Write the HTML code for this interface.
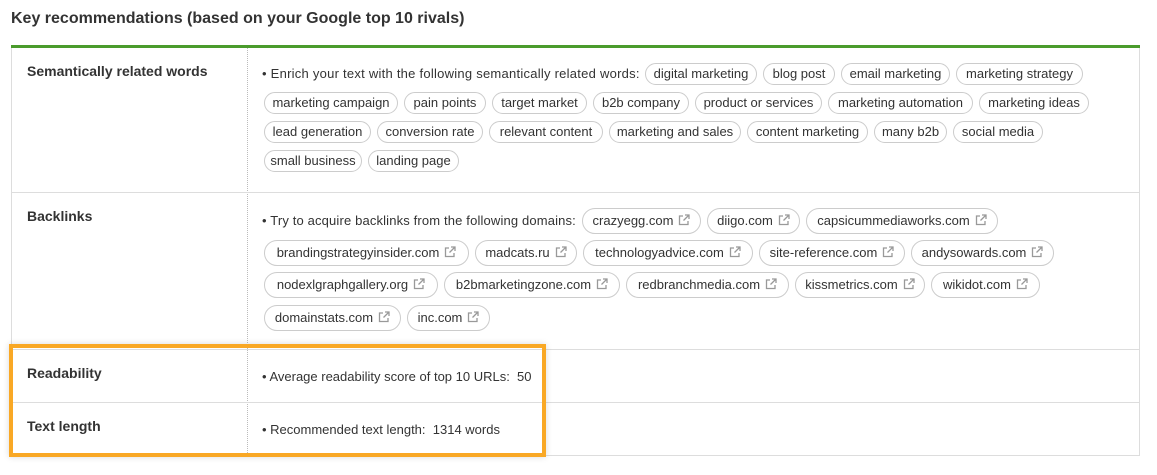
<!DOCTYPE html>
<html><head><meta charset="utf-8"><style>
body{margin:0;width:1157px;height:475px;background:#fff;position:relative;font-family:"Liberation Sans",sans-serif;color:#333;overflow:hidden}
.a{position:absolute;white-space:nowrap}
.t{position:absolute;height:22px;border:1px solid #ccc;border-radius:12px;box-sizing:border-box;font-size:13px;line-height:20px;text-align:center;white-space:nowrap;overflow:hidden;color:#333}
.b{height:26px;line-height:24px;border-radius:13px}
.b svg{vertical-align:-1px;margin-left:5px}
.lbl{position:absolute;left:27px;font-weight:bold;font-size:14px;color:#333}
.txt{position:absolute;left:262px;font-size:13px}
.hl{position:absolute;left:11px;width:1129px;height:1px;background:#ddd}
</style></head><body>
<div class="a" style="left:11px;top:10px;font-size:16px;font-weight:bold;color:#333">Key recommendations (based on your Google top 10 rivals)</div>
<div class="a" style="left:11px;top:45px;width:1129px;height:3px;background:#4a9b2c"></div>
<div class="a" style="left:11px;top:48px;width:1px;height:407px;background:#ddd"></div>
<div class="a" style="left:1139px;top:48px;width:1px;height:407px;background:#ddd"></div>
<div class="a" style="left:247px;top:48px;height:407px;border-left:1px dotted #bbb"></div>
<div class="hl" style="top:192px"></div>
<div class="hl" style="top:349px"></div>
<div class="hl" style="top:402px"></div>
<div class="hl" style="top:455px"></div>

<div class="lbl" style="top:63px">Semantically related words</div>
<div class="lbl" style="top:208px">Backlinks</div>
<div class="lbl" style="top:365px">Readability</div>
<div class="lbl" style="top:418px">Text length</div>

<div class="txt" style="top:66px;letter-spacing:0.25px">• Enrich your text with the following semantically related words:</div>
<div class="t" style="left:645px;top:63px;width:112px">digital marketing</div>
<div class="t" style="left:763px;top:63px;width:72px">blog post</div>
<div class="t" style="left:841px;top:63px;width:109px">email marketing</div>
<div class="t" style="left:956px;top:63px;width:127px">marketing strategy</div>
<div class="t" style="left:264px;top:92px;width:134px">marketing campaign</div>
<div class="t" style="left:404px;top:92px;width:82px">pain points</div>
<div class="t" style="left:492px;top:92px;width:95px">target market</div>
<div class="t" style="left:593px;top:92px;width:96px">b2b company</div>
<div class="t" style="left:695px;top:92px;width:127px">product or services</div>
<div class="t" style="left:828px;top:92px;width:145px">marketing automation</div>
<div class="t" style="left:979px;top:92px;width:110px">marketing ideas</div>
<div class="t" style="left:264px;top:121px;width:107px">lead generation</div>
<div class="t" style="left:377px;top:121px;width:106px">conversion rate</div>
<div class="t" style="left:489px;top:121px;width:114px">relevant content</div>
<div class="t" style="left:609px;top:121px;width:132px">marketing and sales</div>
<div class="t" style="left:747px;top:121px;width:121px">content marketing</div>
<div class="t" style="left:874px;top:121px;width:73px">many b2b</div>
<div class="t" style="left:953px;top:121px;width:90px">social media</div>
<div class="t" style="left:264px;top:150px;width:98px">small business</div>
<div class="t" style="left:368px;top:150px;width:91px">landing page</div>

<svg width="0" height="0" style="position:absolute"><defs><symbol id="x" viewBox="0 0 12 12"><path d="M5 2H1.5v8.5H10V7" fill="none" stroke="#999" stroke-width="1.3"/><path d="M7 1h4v4M11 1L5.5 6.5" fill="none" stroke="#999" stroke-width="1.3"/></symbol></defs></svg>

<div class="txt" style="top:213px;letter-spacing:0.15px">• Try to acquire backlinks from the following domains:</div>
<div class="t b" style="left:582px;top:208px;width:119px">crazyegg.com<svg width="12" height="12"><use href="#x"/></svg></div>
<div class="t b" style="left:707px;top:208px;width:93px">diigo.com<svg width="12" height="12"><use href="#x"/></svg></div>
<div class="t b" style="left:806px;top:208px;width:192px">capsicummediaworks.com<svg width="12" height="12"><use href="#x"/></svg></div>
<div class="t b" style="left:264px;top:240px;width:205px">brandingstrategyinsider.com<svg width="12" height="12"><use href="#x"/></svg></div>
<div class="t b" style="left:475px;top:240px;width:102px">madcats.ru<svg width="12" height="12"><use href="#x"/></svg></div>
<div class="t b" style="left:583px;top:240px;width:170px">technologyadvice.com<svg width="12" height="12"><use href="#x"/></svg></div>
<div class="t b" style="left:759px;top:240px;width:146px">site-reference.com<svg width="12" height="12"><use href="#x"/></svg></div>
<div class="t b" style="left:911px;top:240px;width:143px">andysowards.com<svg width="12" height="12"><use href="#x"/></svg></div>
<div class="t b" style="left:264px;top:272px;width:174px">nodexlgraphgallery.org<svg width="12" height="12"><use href="#x"/></svg></div>
<div class="t b" style="left:444px;top:272px;width:176px">b2bmarketingzone.com<svg width="12" height="12"><use href="#x"/></svg></div>
<div class="t b" style="left:626px;top:272px;width:163px">redbranchmedia.com<svg width="12" height="12"><use href="#x"/></svg></div>
<div class="t b" style="left:795px;top:272px;width:130px">kissmetrics.com<svg width="12" height="12"><use href="#x"/></svg></div>
<div class="t b" style="left:931px;top:272px;width:109px">wikidot.com<svg width="12" height="12"><use href="#x"/></svg></div>
<div class="t b" style="left:264px;top:305px;width:137px">domainstats.com<svg width="12" height="12"><use href="#x"/></svg></div>
<div class="t b" style="left:407px;top:305px;width:83px">inc.com<svg width="12" height="12"><use href="#x"/></svg></div>

<div class="txt" style="top:369px">• Average readability score of top 10 URLs:&nbsp; 50</div>
<div class="txt" style="top:422px">• Recommended text length:&nbsp; 1314 words</div>

<div class="a" style="left:9px;top:344px;width:529px;height:105px;border:4px solid #f9a825;box-shadow:0 0 6px rgba(0,0,0,0.15)"></div>
</body></html>
